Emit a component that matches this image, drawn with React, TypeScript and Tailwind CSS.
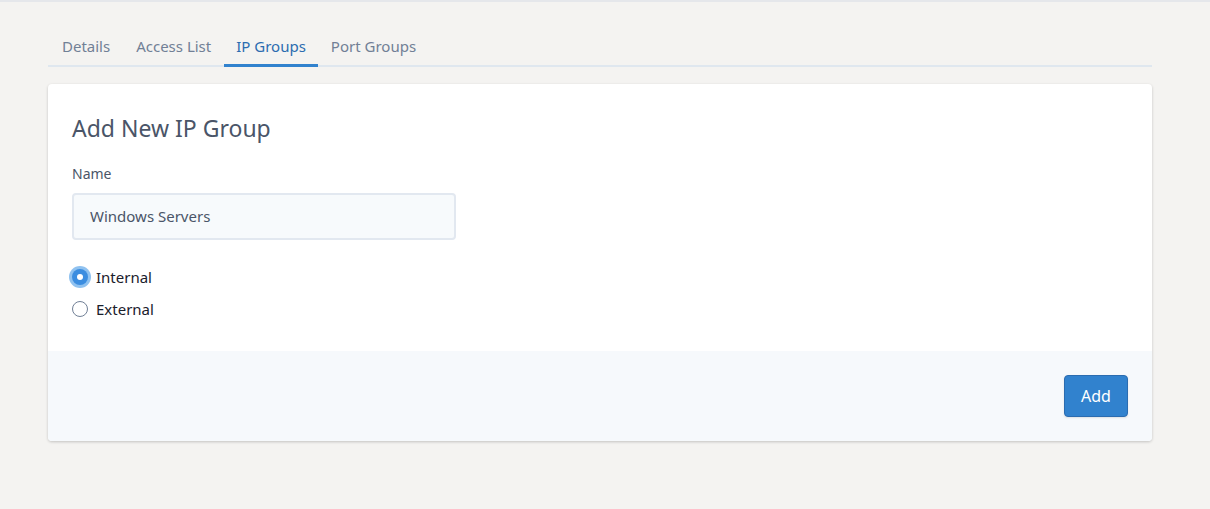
import React from "react";

export default function App() {
  return (
    <div
      className="min-h-[509px] w-full bg-[#f4f3f1] border-t-2 border-[#e5e7eb]"
      style={{ fontFamily: '"Noto Sans", "Open Sans", sans-serif' }}
    >
      <div className="ml-[48px] w-[1104px] pt-[33px]">
        <div className="flex border-b-2 border-[#dfe7ef] text-[15px] leading-[22px] text-[#718096] pl-[1px]">
          <div className="px-[13px] pb-[7px]">Details</div>
          <div className="px-[13px] pb-[7px]">Access List</div>
          <div className="px-[12px] pb-[7px] text-[#2b6cb0] border-b-[3px] border-[#3182ce] -mb-[2px]">IP Groups</div>
          <div className="px-[13px] pb-[7px]">Port Groups</div>
        </div>
        <div className="mt-[17px] bg-white rounded-[4px] shadow-[0_1px_3px_rgba(0,0,0,0.2)] overflow-hidden">
          <div className="px-[24px] pt-[28px] pb-[31px]">
            <h2 className="text-[23px] text-[#4a5568] leading-[32px]">Add New IP Group</h2>
            <label className="block mt-[20px] text-[14px] leading-[20px] text-[#4a5568]">Name</label>
            <div className="mt-[9px] w-[384px] h-[47px] bg-[#f7fafc] border-2 border-[#e2e8f0] rounded-[4px] flex items-center px-[16px] text-[15px] text-[#4a5568]">
              Windows Servers
            </div>
            <div className="mt-[26px] flex items-center gap-[8px] text-[15px] leading-[22px] text-[#1a202c]">
              <span className="w-[16px] h-[16px] rounded-full bg-[#3b8de0] ring-[3px] ring-[#90c2f0] flex items-center justify-center">
                <span className="w-[6px] h-[6px] rounded-full bg-white" />
              </span>
              Internal
            </div>
            <div className="mt-[10px] flex items-center gap-[8px] text-[15px] leading-[22px] text-[#1a202c]">
              <span className="w-[16px] h-[16px] rounded-full border border-[#718096] bg-white" />
              External
            </div>
          </div>
          <div className="bg-[#f6f9fc] h-[90px] flex items-center justify-end pr-[24px]">
            <button className="w-[64px] h-[42px] bg-[#3182ce] text-white text-[16px] rounded-[4px] border border-[#2b6cb0] shadow-[0_1px_2px_rgba(0,0,0,0.1)]">
              Add
            </button>
          </div>
        </div>
      </div>
    </div>
  );
}
